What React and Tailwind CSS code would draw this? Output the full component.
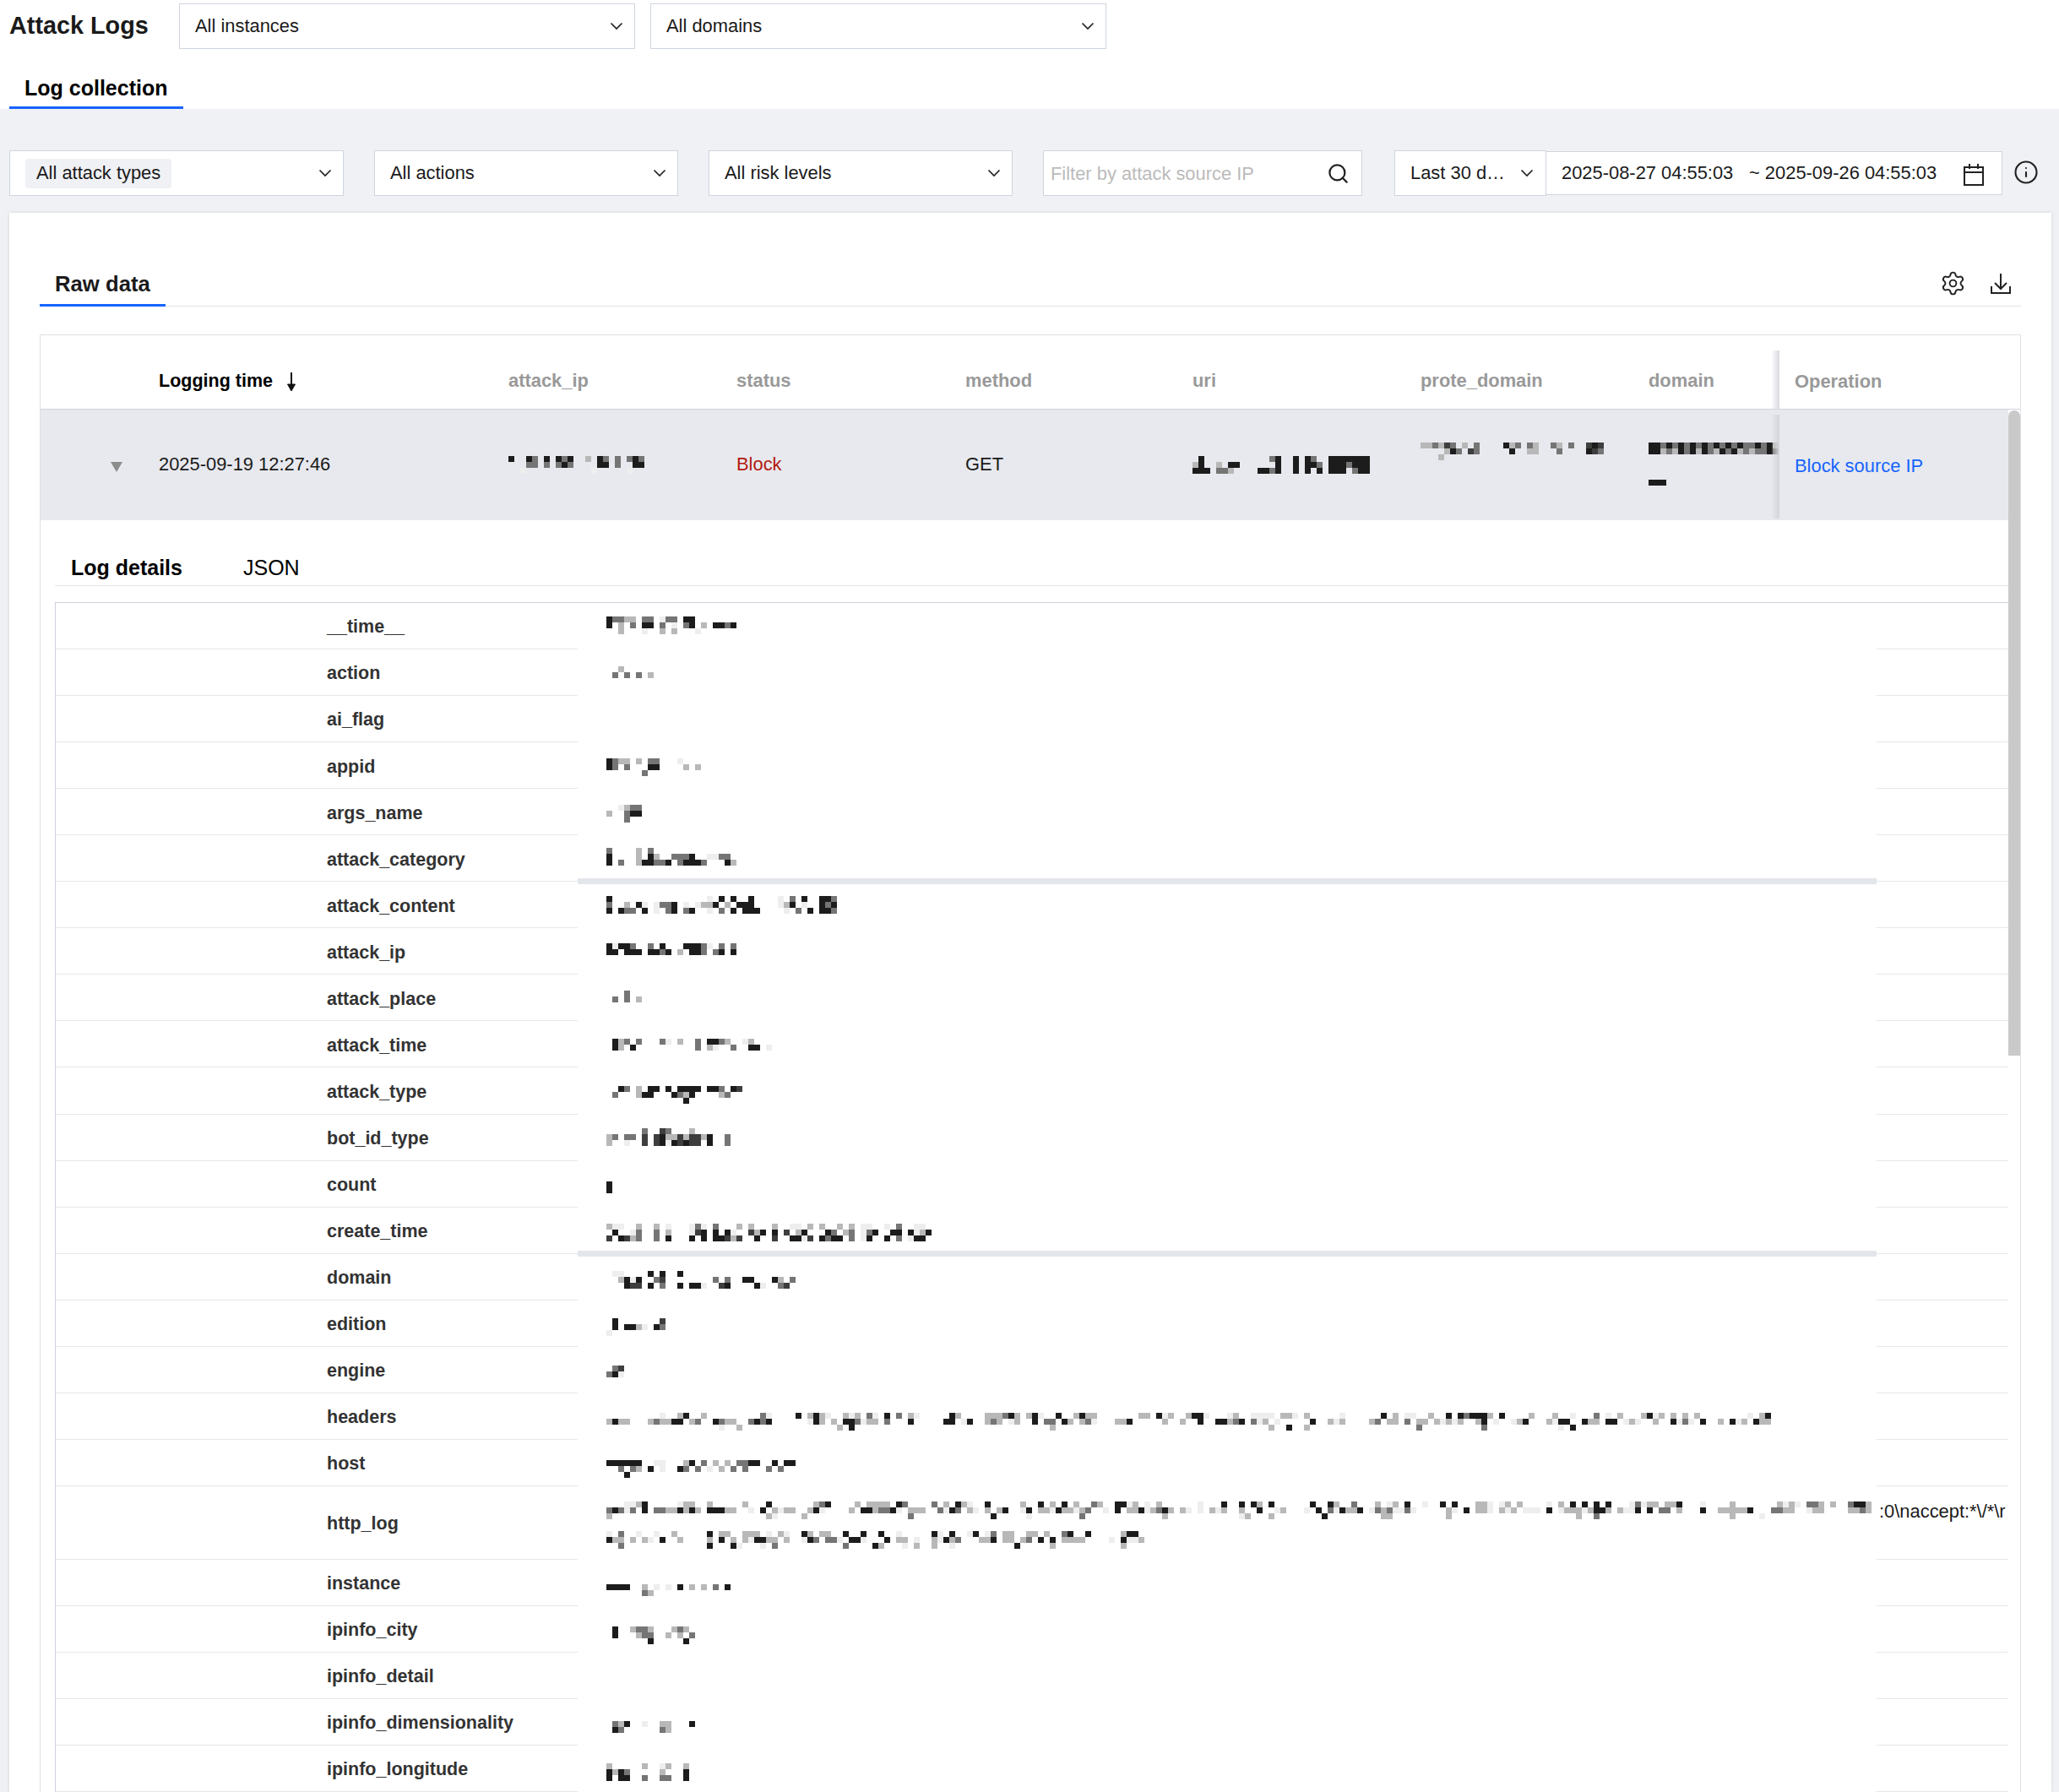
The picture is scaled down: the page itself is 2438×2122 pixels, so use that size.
import { Settings, Search, Info } from 'lucide-react';

const SHADES = { 1: '#eeeeee', 2: '#b8b8b8', 3: '#757575', 4: '#1c1c1c', 5: '#3e3e3e' };

// redacted values: every block is a 7px mosaic cell
function noise(seed, cols, rows, dark = 0.5) {
  let s = seed * 7919 + 13;
  const rnd = () => {
    s = (s * 1664525 + 1013904223) % 4294967296;
    return ((s >>> 8) % 1000) / 1000;
  };
  const gaps = [];
  let gapLeft = 0;
  for (let c = 0; c < cols; c++) {
    if (gapLeft > 0) { gaps.push(true); gapLeft--; }
    else if (c > 1 && c < cols - 2 && rnd() < 0.07) { gaps.push(true); gapLeft = Math.floor(rnd() * 3); }
    else gaps.push(false);
  }
  const out = [];
  for (let r = 0; r < rows; r++) {
    let line = '';
    for (let c = 0; c < cols; c++) {
      const fill = r === 0 ? 0.5 : r === rows - 1 && rows > 2 ? 0.1 : 0.7;
      if (gaps[c] || rnd() > fill) { line += '.'; continue; }
      const v = rnd();
      line += v < dark * 0.7 ? '4' : v < dark ? '3' : v < 0.8 ? '2' : '1';
    }
    out.push(line);
  }
  return out;
}

// sparse row: "3:4 9:2" means column 3 has shade 4, column 9 has shade 2
function sp(text) {
  const line = [];
  text.split(' ').forEach((pair) => {
    const [c, v] = pair.split(':');
    line[Number(c)] = v;
  });
  return Array.from(line, (v) => v ?? '.').join('');
}

function Mosaic({ cells, x = 0, y = 0 }) {
  const w = x + Math.max(...cells.map((l) => l.length)) * 7;
  const h = y + cells.length * 7;
  return (
    <svg width={w} height={h} shapeRendering="crispEdges" className="block shrink-0">
      {cells.map((line, r) =>
        line.split('').map((ch, c) =>
          SHADES[ch] ? <rect key={`${r}-${c}`} x={x + c * 7} y={y + r * 7} width="7" height="7" fill={SHADES[ch]} /> : null
        )
      )}
    </svg>
  );
}

const ROWS = [
  { name: '__time__', x: 34, y: 16, cells: ['43322.33.133.44'.padEnd(22, '.'), '4.2.3.44.3.1.34.2.4434', '..2...1..2.2...1.....'] },
  { name: 'action', x: 41, y: 20, cells: ['.2...', '3.3.3.2'] },
  { name: 'ai_flag' },
  { name: 'appid', x: 34, y: 19, cells: ['4322.2.33...1', '43.3...44....2.2', '......3'] },
  { name: 'args_name', x: 34, y: 19, cells: ['..1233', '2..344', '...3'] },
  { name: 'attack_category', x: 34, y: 15, bar: true, cells: ['3....2.3', '4....2.42..3334..1133', '4.3..244334.34443...42'] },
  { name: 'attack_content', x: 34, y: 17, cells: ['4................1.4.4..4....1.3.4..443', '3..2.41.1334.1.1224.2.444....124.1..434', '4.433.4.1.34.34..1.3.4.444....1.3.4.443'] },
  { name: 'attack_ip', x: 34, y: 18, cells: ['41443..3.4...44431.3.3', '44.444.4434.2.443.34.4.22'.slice(0, 22)] },
  { name: 'attack_place', x: 41, y: 19, cells: ['..3', '3.3.2'] },
  { name: 'attack_time', x: 41, y: 21, cells: ['423.3...31.2..3.4432..12', '42.4..........3.21..3..44.1'.slice(0, 28)] },
  {
    name: 'attack_type', x: 41, y: 22,
    cells: [sp('1:4 2:3 4:2 6:4 7:4 9:4 11:4 12:4 13:4 14:4 16:4 17:4 18:3 20:4 21:5'), sp('0:3 4:2 5:4 6:4 10:4 11:3 12:2 13:4 18:2 19:3'), sp('12:4')],
  },
  {
    name: 'bot_id_type', x: 34, y: 16,
    cells: [sp('6:3 9:5 10:3 14:2'), sp('0:2 1:3 3:3 4:3 6:5 8:5 9:4 10:2 11:2 12:5 13:2 14:5 15:5 16:2 17:4 20:3'), sp('0:2 3:1 6:5 8:5 9:4 10:1 11:4 12:5 13:4 14:5 15:5 17:4 20:3')],
  },
  { name: 'count', x: 34, y: 24, cells: ['4', '4'] },
  {
    name: 'create_time', x: 34, y: 19, bar: true,
    cells: [
      sp('0:2 1:1 2:1 5:2 8:2 10:1 14:1 15:3 16:1 18:3 22:2 24:2 28:2 31:1 32:1 34:2 36:2 39:2 41:2 43:1 44:1 47:1 49:3 52:1 53:1'),
      sp('1:4 4:1 5:3 8:3 10:2 14:1 15:5 16:4 18:4 20:4 21:1 24:5 25:2 26:4 28:4 30:5 32:2 33:4 37:4 38:3 40:2 41:3 43:1 44:3 45:4 48:4 49:4 51:4 52:1 53:2 54:4'),
      sp('0:5 2:4 3:5 4:2 5:3 8:3 10:4 14:4 16:4 18:4 19:4 20:5 21:2 22:5 25:4 28:5 31:4 32:4 33:1 34:5 36:4 37:3 38:4 39:4 41:3 43:1 44:4 47:4 49:3 51:1 52:4 53:4'),
    ],
  },
  {
    name: 'domain', x: 41, y: 20,
    cells: [sp('0:1 1:1 6:4 8:4 11:4'), sp('1:2 2:4 3:1 4:4 7:3 8:5 17:3 19:3 22:4 23:4 27:4 28:2 30:3'), sp('2:4 3:5 4:5 6:4 8:3 11:4 13:4 14:4 15:1 18:5 19:4 24:4 25:1 28:3 29:5')],
  },
  { name: 'edition', x: 34, y: 21, cells: [sp('1:4 9:5'), sp('1:4 3:4 4:4 5:2 6:1 8:4 9:3'), sp('0:1')] },
  { name: 'engine', x: 34, y: 22, cells: [sp('1:3 2:5'), sp('0:3 1:4 2:1')] },
  { name: 'headers', x: 34, y: 23, cells: noise(18, 198, 3, 0.4) },
  { name: 'host', x: 34, y: 24, cells: ['444444..11...24.3.2.2.3344..4.44', '..3.32.4.1..43.3.1.2.3.3...3.3', '...4'] },
  { name: 'http_log', x: 34, y: 18, tall: true, tail: ':0\\naccept:*\\/*\\r', cells: [...noise(19, 214, 3, 0.4), '..........', '..........', ...noise(20, 91, 3, 0.4)] },
  { name: 'instance', x: 34, y: 29, cells: ['4444..2.1.1.4.2.2.3.4', '......32'] },
  { name: 'ipinfo_city', x: 41, y: 24, cells: ['4..2332...232.', '4...233..2.2.3', '......4.....4.'] },
  { name: 'ipinfo_detail' },
  { name: 'ipinfo_dimensionality', x: 41, y: 26, cells: ['324..1..22...4', '43......32'] },
  { name: 'ipinfo_longitude', x: 34, y: 21, cells: ['2.....2..12..2', '4243.....2...4', '4.44..3..33..4'] },
];

const Chevron = () => (
  <svg width="16" height="10" viewBox="0 0 16 10" fill="none" stroke="#222" strokeWidth="1.7" className="shrink-0">
    <path d="M1.5 1.5 8 8l6.5-6.5" />
  </svg>
);

function SelectBox({ label, width, chip }) {
  return (
    <div className={`${width} h-[54px] bg-white border border-[#cfd5de] flex items-center justify-between pl-[18px] pr-[13px]`}>
      {chip ? <span className="bg-[#f0f1f5] rounded-[4px] h-[35px] px-[13px] flex items-center">{label}</span> : <span>{label}</span>}
      <Chevron />
    </div>
  );
}

function Th({ width, children }) {
  return <div className={`${width} text-[#999] font-bold shrink-0`}>{children}</div>;
}

function DetailRow({ row }) {
  const h = row.tall ? 'h-[87px]' : 'h-[55.06px]';
  return (
    <div className={`flex ${h}`}>
      <div className="w-[618px] shrink-0 border-b border-[#e6e7ec] pl-[321px] pt-[3px] flex items-center font-bold text-[21.5px] text-[#333]">{row.name}</div>
      <div className="w-[1538px] shrink-0 relative">
        {row.cells && <Mosaic cells={row.cells} x={row.x} y={row.y} />}
        {row.bar && <div className="absolute left-0 right-0 -bottom-[3px] h-[7px] bg-[#e3e6ea]" />}
      </div>
      <div className={`flex-1 min-w-0 border-b border-[#e6e7ec] whitespace-nowrap ${row.tail ? 'pt-[14px] pl-[3px]' : ''}`}>{row.tail}</div>
    </div>
  );
}

export default function App() {
  return (
    <div className="h-[2122px] w-[2438px] overflow-hidden bg-[#f0f1f5] font-['Liberation_Sans',Arial,sans-serif] text-[21.9px] text-[#1a1a1a] flex flex-col">
      {/* title + instance pickers */}
      <div className="bg-white pt-[4px] pl-[11px]">
        <div className="flex items-center">
          <h1 className="w-[201px] font-bold text-[28.8px] text-[#1a1a1a]">Attack Logs</h1>
          <SelectBox label="All instances" width="w-[540px]" />
          <div className="w-[18px]" />
          <SelectBox label="All domains" width="w-[540px]" />
        </div>
        <div className="h-[71px] flex items-end">
          <div className="w-[206px] h-[55px] border-b-[3px] border-[#1664ff] pl-[18px] font-bold text-[25px] text-black leading-[60px]">Log collection</div>
        </div>
      </div>

      {/* filters */}
      <div className="flex pl-[11px] mt-[49px] items-start">
        <SelectBox label="All attack types" width="w-[396px]" chip />
        <div className="w-[36px]" />
        <SelectBox label="All actions" width="w-[360px]" />
        <div className="w-[36px]" />
        <SelectBox label="All risk levels" width="w-[360px]" />
        <div className="w-[36px]" />
        <div className="w-[378px] h-[54px] bg-white border border-[#cfd5de] flex items-center justify-between pl-[8px] pr-[14px] text-[#bbb]">
          <span className="pt-[2px]">Filter by attack source IP</span>
          <Search size={27} strokeWidth={2} color="#222" />
        </div>
        <div className="w-[38px]" />
        <div className="w-[180px] h-[54px] bg-white border border-[#cfd5de] flex items-center justify-between pl-[18px] pr-[14px]">
          <span>Last 30 d…</span>
          <Chevron />
        </div>
        <div className="w-[540px] h-[52px] mt-[1px] bg-white border border-l-0 border-[#cfd5de] flex items-center pl-[18px] pr-[20px]">
          <span className="whitespace-nowrap w-[222px]">2025-08-27 04:55:03</span>
          <span className="whitespace-nowrap">~ 2025-09-26 04:55:03</span>
          <svg width="26" height="28" viewBox="0 0 26 28" fill="none" stroke="#222" strokeWidth="2" className="ml-auto mt-[4px]">
            <path d="M2 5h22v21H2zM2 11h22M8 1v6M18 1v6" />
          </svg>
        </div>
        <Info size={30} strokeWidth={1.7} color="#222" className="ml-[13px] mt-[11px]" />
      </div>

      {/* card */}
      <div className="mt-[20px] ml-[11px] w-[2418px] flex-1 min-h-0 bg-white shadow-[0_0_4px_rgba(0,0,0,0.12)] pl-[36px] pr-[36px] overflow-hidden">
        <div className="h-[111px] flex items-end border-b border-[#e3e4e8] relative">
          <div className="w-[149px] h-[54px] border-b-[3px] border-[#1664ff] -mb-px pl-[18px] font-bold text-[25.7px] text-[#1a1a1a] leading-[54px]">Raw data</div>
          <Settings size={31} strokeWidth={1.5} color="#222" className="absolute right-[65px] top-[68px]" />
          <svg width="26" height="26" viewBox="0 0 26 26" fill="none" stroke="#222" strokeWidth="2" className="absolute right-[11px] top-[71px]">
            <path d="M13 1v17M6 12l7 7 7-7M2 16v8h22v-8" />
          </svg>
        </div>

        <div className="mt-[33px] border-t border-l border-r border-[#dfe0e6] relative h-[1800px] overflow-hidden">
          {/* column heads */}
          <div className="h-[88px] flex items-center border-b border-[#cfd1dc] pl-[140px] pt-[22px]">
            <div className="w-[414px] shrink-0 font-bold text-[21.5px] text-black flex items-center gap-[15px]">
              Logging time
              <svg width="14" height="24" viewBox="0 0 14 24" fill="none" stroke="#111" strokeWidth="2">
                <path d="M7 1v20" />
                <path d="M2.500 15 7 23l4.500-8z" fill="#111" strokeWidth="1" />
              </svg>
            </div>
            <Th width="w-[270px]">attack_ip</Th>
            <Th width="w-[271px]">status</Th>
            <Th width="w-[269px]">method</Th>
            <Th width="w-[270px]">uri</Th>
            <Th width="w-[270px]">prote_domain</Th>
            <Th width="w-[155px]">domain</Th>
            <div className="w-[285px] shrink-0 font-bold text-[#999] pl-[18px] pt-[2px]">Operation</div>
          </div>

          {/* expanded record */}
          <div className="h-[131px] flex items-center bg-[#e7e9ee] mr-[14px]">
            <div className="w-[140px] shrink-0 pl-[83px] pt-[4px]">
              <svg width="14" height="12" viewBox="0 0 14 12"><path d="M0 0h14L7 12z" fill="#8c8c8c" /></svg>
            </div>
            <div className="w-[414px] shrink-0">2025-09-19 12:27:46</div>
            <div className="w-[270px] shrink-0 -mt-[1px]">
              <Mosaic cells={[sp('0:4 3:4 4:3 6:4 8:4 9:3 10:4 13:2 15:4 16:3 18:3 20:3 21:4 22:3'), sp('3:3 4:3 6:3 8:3 9:4 10:3 15:4 16:4 18:3 21:4 22:4'), sp('2:1 14:1 20:1')]} />
            </div>
            <div className="w-[271px] shrink-0 text-[#b2190f]">Block</div>
            <div className="w-[269px] shrink-0">GET</div>
            <div className="w-[270px] shrink-0">
              <Mosaic cells={[sp('1:4 13:3 14:4 17:4 19:4 20:3 23:4 24:4 25:4 26:4 27:4 28:4 29:4'), sp('0:2 1:4 4:2 6:4 7:4 14:4 17:4 19:4 20:4 21:3 23:4 24:4 25:4 26:3 27:4 28:4 29:4'), sp('0:4 1:4 2:4 4:3 5:3 6:2 11:4 12:4 13:3 14:4 17:4 19:4 21:4 23:4 24:4 25:4 27:3 28:4 29:4')]} />
            </div>
            <div className="w-[270px] shrink-0 -mt-[32px]">
              <Mosaic cells={[sp('0:2 1:2 2:3 3:2 4:5 5:3 7:2 9:3 14:4 15:2 16:3 18:3 19:2 22:3 23:2 25:3 28:5 29:4 30:5'), sp('4:2 5:4 6:3 8:5 9:3 15:4 18:2 19:2 23:3 28:4 29:5 30:3'), sp('3:2')]} />
            </div>
            <div className="w-[155px] shrink-0 self-stretch overflow-hidden pt-[39px] relative">
              <Mosaic cells={['4434343434343434334342', '4423243424324342323343']} />
              <div className="h-[37px] flex items-end"><Mosaic cells={['444']} /></div>
              <div className="absolute right-0 top-[6px] bottom-[2px] w-[10px] bg-gradient-to-r from-transparent to-[#d3d5dc]" />
            </div>
            <div className="flex-1 pl-[18px] text-[#1664ff] pt-[4px]">Block source IP</div>
          </div>

          {/* log detail tabs */}
          <div className="ml-[17px] mr-[14px]">
            <div className="h-[78px] flex items-end border-b border-[#e3e4e8] pl-[19px] pb-[2px] text-[25px] text-black">
              <span className="font-bold w-[204px]">Log details</span>
              <span>JSON</span>
            </div>
            <div className="mt-[19px] border-t border-l border-[#cfd0dc]">
              {ROWS.map((row) => <DetailRow key={row.name} row={row} />)}
            </div>
          </div>

          {/* scroll thumb */}
          <div className="absolute right-0 top-[89px] w-[14px] h-[764px] bg-[#c9c9c9] rounded-t-[7px]" />
          {/* shadow of the fixed column head */}
          <div className="absolute left-[2049px] top-[18px] w-[10px] h-[70px] bg-gradient-to-r from-transparent to-[#d9dae0]" />
        </div>
      </div>
    </div>
  );
}
